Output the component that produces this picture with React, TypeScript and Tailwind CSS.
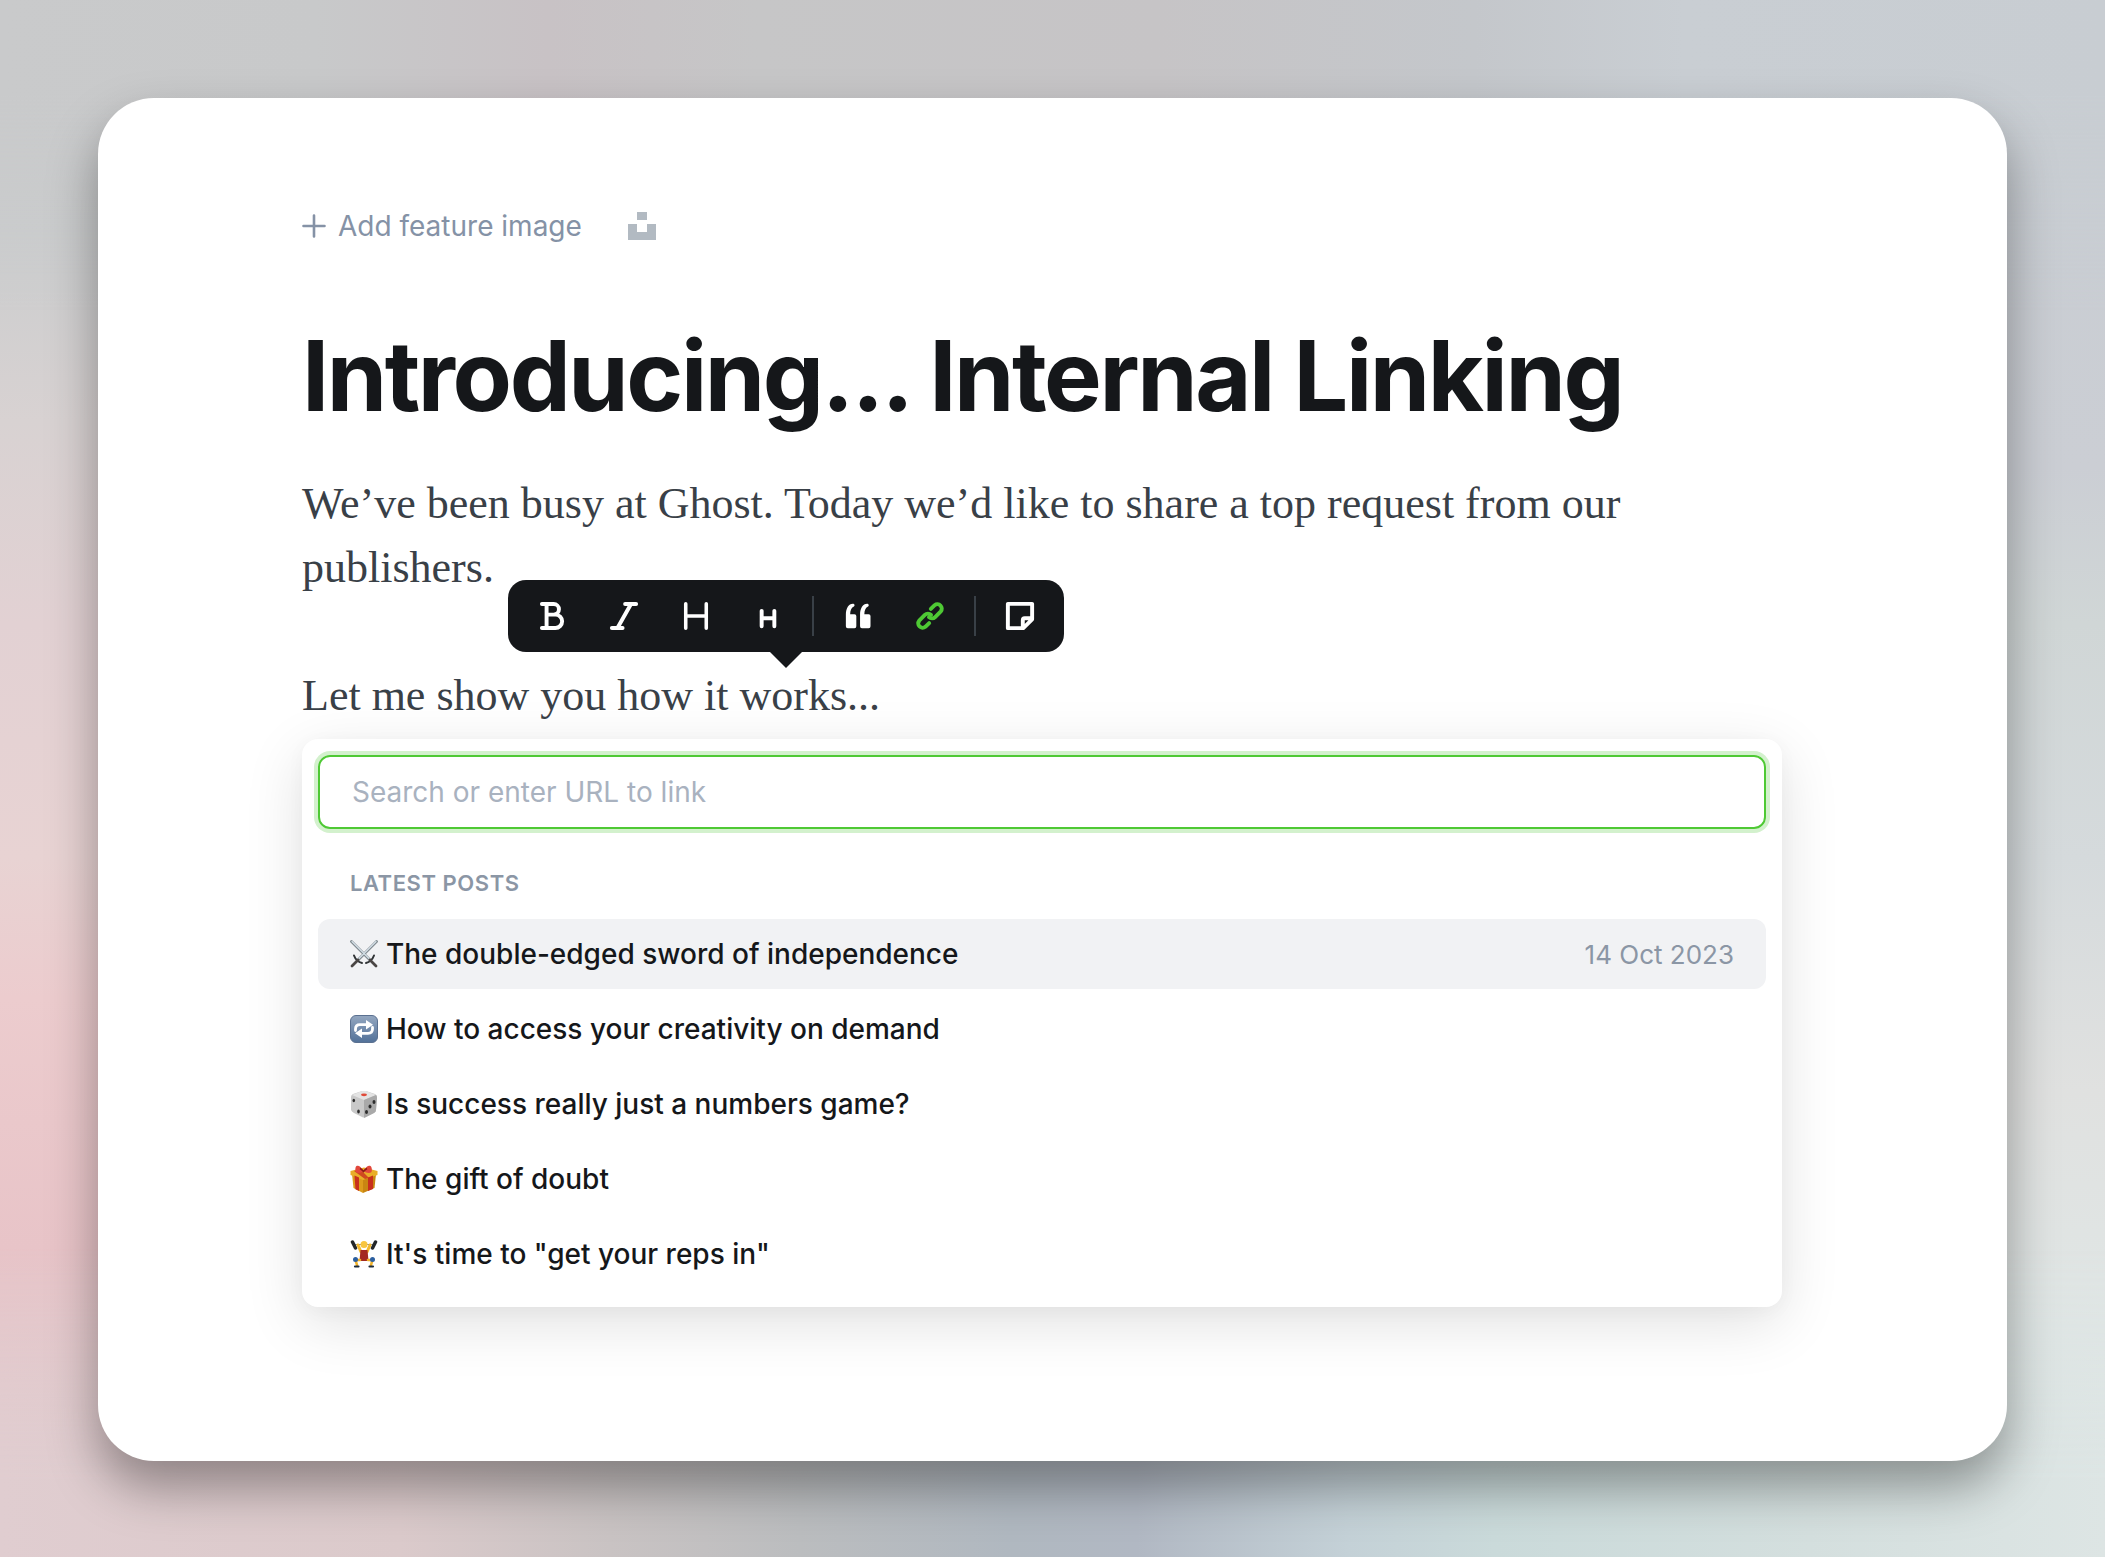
import React, { useState } from 'react';

const POSTS = [
  { title: 'The double-edged sword of independence', date: '14 Oct 2023', icon: <SwordsEmoji /> },
  { title: 'How to access your creativity on demand', date: '7 Oct 2023', icon: <RepeatEmoji /> },
  { title: 'Is success really just a numbers game?', date: '30 Sep 2023', icon: <DieEmoji /> },
  { title: 'The gift of doubt', date: '23 Sep 2023', icon: <GiftEmoji /> },
  { title: 'It\'s time to "get your reps in"', date: '16 Sep 2023', icon: <LifterEmoji /> },
];

export default function App() {
  const [query, setQuery] = useState('');
  const [selected, setSelected] = useState(0);

  return (
    <div className="relative isolate min-h-screen overflow-hidden bg-[#c9cdd1] p-[98px] font-['Inter',sans-serif]">
      <Backdrop />

      <main className="rounded-[56px] bg-white pt-[104px] pr-[225px] pb-[154px] pl-[204px] shadow-[0_26px_50px_rgba(0,0,0,0.36)]">
        {/* Feature image */}
        <div className="flex h-12 items-center gap-[46px] text-[#8592a6]">
          <button className="flex items-center gap-3 text-[28px] leading-8">
            <svg width="24" height="24" viewBox="0 0 24 24" fill="none" stroke="currentColor" strokeWidth="2.6" strokeLinecap="round">
              <path d="M12 1.500v21M1.500 12h21" />
            </svg>
            Add feature image
          </button>
          <button aria-label="Unsplash">
            <svg width="28" height="28" viewBox="0 0 28 28" fill="#b2bac2">
              <path d="M9 0h10v8H9zM0 12h9v8h10v-8h9v16H0z" />
            </svg>
          </button>
        </div>

        {/* Post */}
        <h1 className="mt-[70px] text-[97px] leading-[112px] font-bold tracking-tight text-[#15171a]">Introducing... Internal Linking</h1>
        <div className="mt-10 font-['Liberation_Serif',serif] text-[44px] leading-[64px] text-[#394047]">
          <p>
            We’ve been busy at Ghost. Today we’d like to share a top request from our
            <br />
            publishers.
          </p>
          <div className="relative mt-16">
            <p>Let me show you how it works...</p>
            <Toolbar />
          </div>
        </div>

        {/* Link search */}
        <div className="mt-[11px] rounded-2xl bg-white px-4 pt-4 pb-[18px] shadow-[0_16px_60px_rgba(0,0,0,0.12),0_4px_20px_rgba(0,0,0,0.03)]">
          <input
            type="text"
            aria-label="Search or enter URL to link"
            placeholder="Search or enter URL to link"
            value={query}
            onChange={(e) => setQuery(e.target.value)}
            className="block h-[74px] w-full rounded-xl border-2 border-[#4ec934] px-8 text-[28px] text-[#15171a] ring-4 ring-[#d3f1cd] outline-none placeholder:text-[#a9b2bf]"
          />
          <h2 className="mt-[38px] px-8 text-[22px] leading-8 font-semibold tracking-wide text-[#8b96a5] uppercase">Latest posts</h2>
          <ul className="mt-5 flex flex-col gap-[5px]">
            {POSTS.map((post, i) => (
              <li key={post.title}>
                <button
                  onClick={() => setSelected(i)}
                  className={`flex h-[70px] w-full items-center gap-2 rounded-xl px-8 text-left text-[28px] font-medium text-[#15171a] ${i === selected ? 'bg-[#f1f2f4]' : ''}`}
                >
                  {post.icon}
                  <span className="grow">{post.title}</span>
                  {i === selected && <span className="text-[26px] font-normal text-[#8b96a5]">{post.date}</span>}
                </button>
              </li>
            ))}
          </ul>
        </div>
      </main>
    </div>
  );
}

const Toolbar = () => (
  <div className="absolute -top-[84px] left-[206px] flex h-[72px] items-center rounded-[18px] bg-[#15171a] px-2 text-white">
    <ToolButton label="Bold">
      <path d="M4.200 2.200h12.600a5.600 5.600 0 0 1 0 11.300H9.200M16.800 13.500h1.900a7.100 7.100 0 0 1 0 14.300H4.200M9.200 2.200v25.600" />
    </ToolButton>
    <ToolButton label="Italic">
      <path d="M16.200 2.200H28M2 27.800h11.500M22.500 2.200 8 27.800" />
    </ToolButton>
    <ToolButton label="Heading">
      <path d="M4 2v26M26 2v26M4 15h22" strokeWidth="3.800" />
    </ToolButton>
    <ToolButton label="Subheading">
      <path d="M8.200 9.500v16.500M21.800 9.500v16.500M8.200 17.500h13.600" />
    </ToolButton>
    <Divider />
    <ToolButton label="Quote">
      <g fill="currentColor" stroke="none">
        <path d="M2 13.500C2 6.500 5 2 9.500 1.800c2.200 0 2.400 2.600.6 3.300-2.200.9-3.400 4-3.500 7.900h4.600a2 2 0 0 1 2 2v11a2 2 0 0 1-2 2H4a2 2 0 0 1-2-2z" />
        <path d="M17.200 13.500C17.200 6.500 20.200 2 24.700 1.800c2.200 0 2.400 2.600.6 3.300-2.200.9-3.400 4-3.500 7.900h4.600a2 2 0 0 1 2 2v11a2 2 0 0 1-2 2h-7.200a2 2 0 0 1-2-2z" />
      </g>
    </ToolButton>
    <ToolButton label="Link" active>
      <path d="M15.900 7.400 20 3.400A4.700 4.700 0 0 1 26.600 10l-6.100 6.100a4.700 4.700 0 0 1-6.600 0" />
      <path d="M14.100 22.600 10 26.600A4.700 4.700 0 0 1 3.400 20l6.100-6.100a4.700 4.700 0 0 1 6.600 0" />
    </ToolButton>
    <Divider />
    <ToolButton label="Save as snippet">
      <path d="M28 2H2v26h16.500L28 18.500zM18 27.500V19.500a2 2 0 0 1 2-2h7.500" />
    </ToolButton>
    <span className="absolute -bottom-4 left-1/2 -translate-x-1/2">
      <svg width="34" height="17" viewBox="0 0 34 17" fill="#15171a">
        <path d="M0 0h34L17 17z" />
      </svg>
    </span>
  </div>
);

const ToolButton = ({ label, active, children }: any) => (
  <button aria-label={label} className={`flex h-[72px] w-[72px] items-center justify-center ${active ? 'text-[#4ec934]' : ''}`}>
    <svg width="28" height="28" viewBox="0 0 30 30" fill="none" stroke="currentColor" strokeWidth="4.200" strokeLinecap="round" strokeLinejoin="round" overflow="visible">
      {children}
    </svg>
  </button>
);

const Divider = () => <span className="mx-2 h-10 w-[2px] bg-[#394047]" />;

// Soft colour wash behind the card: one gradient per side, blended into each other
function Backdrop() {
  return (
    <svg className="absolute inset-0 -z-10 h-full w-full" viewBox="0 0 100 100" preserveAspectRatio="none">
      <defs>
        <linearGradient id="wash-left" x1="0" y1="0" x2="0" y2="1">
          <stop offset="0" stopColor="#c9cacb" />
          <stop offset=".15" stopColor="#cbcdce" />
          <stop offset=".27" stopColor="#d8d2d2" />
          <stop offset=".4" stopColor="#e2d1d3" />
          <stop offset=".55" stopColor="#e8d3d3" />
          <stop offset=".64" stopColor="#ecccce" />
          <stop offset=".8" stopColor="#e8c4c8" />
          <stop offset="1" stopColor="#e0cdd0" />
        </linearGradient>
        <linearGradient id="wash-right" x1="0" y1="0" x2="0" y2="1">
          <stop offset="0" stopColor="#c8cdd2" />
          <stop offset=".3" stopColor="#cbced4" />
          <stop offset=".4" stopColor="#d0d6d6" />
          <stop offset=".55" stopColor="#d5dadc" />
          <stop offset=".7" stopColor="#e0e1e0" />
          <stop offset=".85" stopColor="#e0e6e5" />
          <stop offset="1" stopColor="#dde5e4" />
        </linearGradient>
        <linearGradient id="wash-top">
          <stop offset="0" stopColor="#c9cacb" />
          <stop offset=".15" stopColor="#c8c9ca" />
          <stop offset=".26" stopColor="#c8c2c5" />
          <stop offset=".36" stopColor="#c6c6c7" />
          <stop offset=".55" stopColor="#c6c4c6" />
          <stop offset=".7" stopColor="#c4c7cb" />
          <stop offset=".8" stopColor="#c9ced3" />
          <stop offset="1" stopColor="#c8cdd2" />
        </linearGradient>
        <linearGradient id="wash-bottom">
          <stop offset="0" stopColor="#e0cdd0" />
          <stop offset=".19" stopColor="#dbcacb" />
          <stop offset=".29" stopColor="#c9c3c3" />
          <stop offset=".38" stopColor="#bbbdbf" />
          <stop offset=".48" stopColor="#b0b8c0" />
          <stop offset=".54" stopColor="#b1b8c3" />
          <stop offset=".64" stopColor="#c4d1d7" />
          <stop offset=".71" stopColor="#cadada" />
          <stop offset=".86" stopColor="#d4dfde" />
          <stop offset="1" stopColor="#dde5e4" />
        </linearGradient>
        <linearGradient id="fade-x">
          <stop offset=".1" stopColor="#000" />
          <stop offset=".9" stopColor="#fff" />
        </linearGradient>
        <linearGradient id="fade-down" x1="0" y1="0" x2="0" y2="1">
          <stop offset=".8" stopColor="#000" />
          <stop offset=".95" stopColor="#fff" />
        </linearGradient>
        <linearGradient id="fade-up" x1="0" y1="0" x2="0" y2="1">
          <stop offset=".06" stopColor="#fff" />
          <stop offset=".2" stopColor="#000" />
        </linearGradient>
        <mask id="mask-right">
          <rect width="100" height="100" fill="url(#fade-x)" />
        </mask>
        <mask id="mask-bottom">
          <rect width="100" height="100" fill="url(#fade-down)" />
        </mask>
        <mask id="mask-top">
          <rect width="100" height="100" fill="url(#fade-up)" />
        </mask>
      </defs>
      <rect width="100" height="100" fill="url(#wash-left)" />
      <rect width="100" height="100" fill="url(#wash-right)" mask="url(#mask-right)" />
      <rect width="100" height="100" fill="url(#wash-top)" mask="url(#mask-top)" />
      <rect width="100" height="100" fill="url(#wash-bottom)" mask="url(#mask-bottom)" />
    </svg>
  );
}

function SwordsEmoji() {
  return (
    <svg width="28" height="28" viewBox="0 0 28 28" className="shrink-0" strokeLinecap="round">
      <path d="M1.500 1.500 20 20M26.500 1.500 8 20" stroke="#7d878d" strokeWidth="2.800" />
      <path d="M2 1.500 19 18.500M26 1.500 9 18.500" stroke="#d6e2e9" strokeWidth="1.200" />
      <path d="M4 15.500c1.500 4 4 6.500 8 7.500M24 15.500c-1.500 4-4 6.500-8 7.500" stroke="#303436" strokeWidth="2" fill="none" />
      <path d="m8 20-6 6M20 20l6 6" stroke="#4a4644" strokeWidth="2.800" />
    </svg>
  );
}

function RepeatEmoji() {
  return (
    <svg width="28" height="28" viewBox="0 0 28 28" className="shrink-0">
      <defs>
        <linearGradient id="repeat-bg" x1="0" y1="0" x2="0" y2="1">
          <stop offset="0" stopColor="#94a7c0" />
          <stop offset="1" stopColor="#527199" />
        </linearGradient>
      </defs>
      <rect x=".5" y=".5" width="27" height="27" rx="5.500" fill="url(#repeat-bg)" stroke="#5a7090" />
      <path d="M5.500 15.500v-1.500c0-2.800 1.700-4.300 4.500-4.300h7M22.500 12.500V14c0 2.800-1.700 4.300-4.500 4.300h-7" fill="none" stroke="#fff" strokeWidth="2.800" strokeLinecap="round" />
      <path d="m16 5 7 4.700-7 4.700zM12 13.600l-7 4.700 7 4.700z" fill="#fff" />
    </svg>
  );
}

function DieEmoji() {
  return (
    <svg width="28" height="28" viewBox="0 0 28 28" className="shrink-0">
      <path d="M3 4 12 1h4l9 3q2 1 2 3l-1 13q0 2-2 3l-8 4q-2 1-4 0l-8-4q-2-1-3-3L1 7q0-2 2-3z" fill="#c9c9c9" />
      <path d="M2 5 12 1h4l10 4-12 5z" fill="#e4e4e4" />
      <path d="m14 10 12-5q1 1 1 3l-1 12q0 2-2 3l-10 5z" fill="#a9a9a9" />
      <ellipse cx="14" cy="4.800" rx="3" ry="1.400" fill="#e04a39" />
      <g fill="#2d2d2d">
        <ellipse cx="3.800" cy="10.500" rx="1.300" ry="1.800" />
        <ellipse cx="8.500" cy="21.500" rx="1.300" ry="1.900" />
        <ellipse cx="24" cy="12" rx="1.500" ry="2" />
        <ellipse cx="20" cy="16.500" rx="1.500" ry="2" />
        <ellipse cx="16.500" cy="22" rx="1.500" ry="2" />
      </g>
    </svg>
  );
}

function GiftEmoji() {
  return (
    <svg width="28" height="28" viewBox="0 0 28 28" className="shrink-0">
      <path d="m2 9 11 5v14L3.500 23z" fill="#dd9c1c" />
      <path d="m26 9-13 5v14l11.500-5z" fill="#c98612" />
      <path d="M.5 6 14 2.500 27.500 6v4L13 15 .5 10z" fill="#e9ae28" />
      <path d="m4.500 10.500 4.500 2V26l-3.500-1.800zM18 12.500l5-2V24l-5 2z" fill="#c82f1d" />
      <path d="m4 6 6-2 9 9-4 1z" fill="#c82f1d" opacity=".8" />
      <path d="M13.500 6C11 1 8 0 6.500 1S5 6.500 6.500 7.500s5 .5 7-1.500c2 2 6 2.500 7.500 1.500s1-5.500-.5-6.500-4.500 0-7 5z" fill="#e2473c" />
      <path d="M10 3.500q2 1 3.500 3 1.500-2 3.500-3" stroke="#8d1b16" strokeWidth="1.400" fill="none" />
    </svg>
  );
}

function LifterEmoji() {
  return (
    <svg width="28" height="28" viewBox="0 0 28 28" className="shrink-0" strokeLinecap="round">
      <path d="M4 4.500h20" stroke="#8c8f92" strokeWidth="1.200" />
      <path d="m2.500 2 3 6M25.500 2l-3 6" stroke="#232629" strokeWidth="3.500" />
      <path d="m8 5 3 7h6l3-7" fill="none" stroke="#f4b82b" strokeWidth="3" strokeLinejoin="round" />
      <circle cx="14" cy="4.500" r="3.500" fill="#f8c540" />
      <path d="M10.500 10h7l1 11h-9z" fill="#a32920" />
      <path d="M10 20H5.500L7 25M18 20h4.500L21 25" fill="none" stroke="#f0b22a" strokeWidth="2.600" />
      <circle cx="5.500" cy="19.500" r="2.500" fill="#2c5fa0" />
      <circle cx="22.500" cy="19.500" r="2.500" fill="#2c5fa0" />
      <path d="M5 26.500h3.500M19.500 26.500H23" stroke="#1d2b3a" strokeWidth="2.200" />
    </svg>
  );
}
